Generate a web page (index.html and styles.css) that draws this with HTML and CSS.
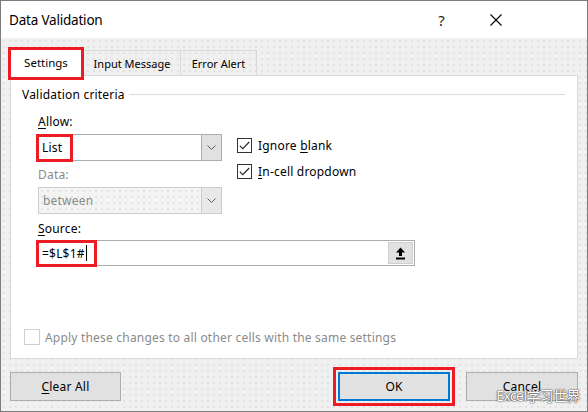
FILE: index.html
```html
<!DOCTYPE html>
<html>
<head>
<meta charset="utf-8">
<link rel="stylesheet" href="styles.css">
</head>
<body>
<div class="window">
  <div class="titlebar">
    <span class="title">Data Validation</span>
    <span class="help">?</span>
    <span class="close"><svg width="12" height="12" viewBox="0 0 12 12"><path d="M0.5 0.5 L11.5 11.5 M11.5 0.5 L0.5 11.5" stroke="#000" stroke-width="1.1" fill="none"/></svg></span>
  </div>
  <div class="body">
    <div class="tabs">
      <div class="tab active">Settings</div>
      <div class="tab">Input Message</div>
      <div class="tab">Error Alert</div>
    </div>
    <div class="panel">
      <div class="group-head"><span>Validation criteria</span><span class="rule"></span></div>
      <div class="criteria">
        <div class="left">
          <div class="lbl"><u>A</u>llow:</div>
          <div class="combo">
            <span class="val"><span class="hl list">List</span></span>
            <span class="drop"><svg width="9" height="5" viewBox="0 0 9 5"><path d="M0.5 0.5 L4.5 4.5 L8.5 0.5" stroke="#5a5a5a" fill="none"/></svg></span>
          </div>
          <div class="lbl disabled gap-data">Data:</div>
          <div class="combo off">
            <span class="val">between</span>
            <span class="drop"><svg width="9" height="5" viewBox="0 0 9 5"><path d="M0.5 0.5 L4.5 4.5 L8.5 0.5" stroke="#5a5a5a" fill="none"/></svg></span>
          </div>
        </div>
        <div class="checks">
          <div class="check"><span class="box"><svg width="11" height="9" viewBox="0 0 11 9"><path d="M0.8 4.6 L3.8 7.6 L10.2 1" stroke="#222" stroke-width="1.1" fill="none"/></svg></span><span>Ignore <u>b</u>lank</span></div>
          <div class="check"><span class="box"><svg width="11" height="9" viewBox="0 0 11 9"><path d="M0.8 4.6 L3.8 7.6 L10.2 1" stroke="#222" stroke-width="1.1" fill="none"/></svg></span><span><u>I</u>n-cell dropdown</span></div>
        </div>
      </div>
      <div class="lbl gap-source"><u>S</u>ource:</div>
      <div class="source">
        <span class="val"><span class="hl formula">=$L$1#<span class="caret"></span></span></span>
        <span class="ref-btn"><svg width="11" height="13" viewBox="0 0 11 13"><path d="M5.5 0.5 L10 5.5 L7 5.5 L7 9 L4 9 L4 5.5 L1 5.5 Z" fill="#000"/><rect x="1" y="10.5" width="9" height="2" fill="#000"/></svg></span>
      </div>
      <div class="apply"><span class="box off"></span><span>Apply these changes to all other cells with the same settings</span></div>
    </div>
    <div class="buttons">
      <div class="btn"><u>C</u>lear All</div>
      <div class="spacer"></div>
      <div class="btn ok">OK</div>
      <div class="btn cancel">Cancel</div>
    </div>
  </div>
  <div class="watermark">Excel学习世界</div>
</div>
</body>
</html>
```

FILE: styles.css
```css
* { box-sizing: border-box; }
html, body { margin: 0; padding: 0; }
body {
  font-family: "Noto Sans", "Noto Sans CJK SC", sans-serif;
  font-size: 12px;
  letter-spacing: 0.2px;
  color: #000;
  background: #fff;
}
u { text-decoration: underline; text-underline-offset: 2px; }
.window {
  position: relative;
  width: 588px;
  height: 412px;
  border: 1px solid #7d7d7d;
  display: flex;
  flex-direction: column;
  background: #fff;
}
.titlebar {
  height: 37px;
  display: flex;
  align-items: center;
  background: #fff;
}
.title {
  font-size: 13.5px;
  margin-left: 8px;
  flex: 1;
  letter-spacing: -0.2px;
}
.help {
  font-size: 15px;
  margin-right: 45px;
  color: #222;
}
.close {
  display: flex;
  margin-right: 85px;
}
.body {
  flex: 1;
  background-color: #f0f0f0;
  background-image: radial-gradient(circle, #dadada 0.6px, transparent 0.9px);
  background-size: 6px 6px;
  padding: 9px 9px 0 7px;
  display: flex;
  flex-direction: column;
}
.tabs {
  display: flex;
  height: 28px;
  align-items: flex-end;
}
.tab {
  height: 25px;
  border: 1px solid #d9d9d9;
  border-bottom: none;
  display: flex;
  align-items: center;
  justify-content: center;
  background: transparent;
  font-size: 11px;
  letter-spacing: 0;
}
.tab + .tab { margin-left: -1px; }
.tab:nth-child(2) { width: 98px; }
.tab:nth-child(3) { width: 77px; }
.tab.active {
  position: relative;
  z-index: 2;
  width: 76px;
  height: 33px;
  margin-bottom: -5px;
  border: 3px solid #ed1c24;
  background: #fff;
  padding-bottom: 3px;
  font-size: 11.5px;
}
.panel {
  margin-left: 2px;
  height: 284px;
  background: #fff;
  border: 1px solid #d9d9d9;
  display: flex;
  flex-direction: column;
  padding-left: 27px;
}
.group-head {
  display: flex;
  align-items: center;
  height: 16px;
  margin-top: 10px;
  margin-left: -16px;
  margin-right: 12px;
}
.rule {
  flex: 1;
  height: 1px;
  background: #dcdcdc;
  margin-left: 4px;
}
.criteria {
  display: flex;
  margin-top: 12px;
}
.left {
  width: 184px;
  display: flex;
  flex-direction: column;
}
.lbl {
  height: 16px;
  line-height: 16px;
}
.disabled { color: #8a8a8a; }
.gap-data { margin-top: 6px; }
.gap-source { margin-top: 7px; }
.combo {
  margin-top: 4px;
  height: 27px;
  width: 184px;
  border: 1px solid #adadad;
  display: flex;
  background: #fff;
}
.combo .val {
  flex: 1;
  display: flex;
  align-items: center;
  padding-left: 0;
}
.combo.off {
  border-color: #cccccc;
  background-color: #f4f4f4;
  background-image: radial-gradient(circle, #dcdcdc 0.6px, transparent 0.9px);
  background-size: 6px 6px;
  color: #8a8a8a;
}
.combo.off .val { padding-left: 4px; }
.drop {
  width: 20px;
  background: #e1e1e1;
  border-left: 1px solid #adadad;
  display: flex;
  align-items: center;
  justify-content: center;
}
.combo.off .drop { border-left-color: #cccccc; background: #e8e8e8; }
.hl {
  display: inline-flex;
  align-items: center;
  border: 3px solid #ed1c24;
  height: 28px;
  margin-left: -3px;
}
.list { width: 37px; padding-left: 3px; }
.formula { width: 61px; padding-left: 3px; height: 27px; }
.caret {
  display: inline-block;
  width: 1px;
  height: 16px;
  background: #000;
  margin-left: 1px;
}
.checks {
  margin-left: 15px;
  margin-top: 24px;
  display: flex;
  flex-direction: column;
  gap: 12px;
}
.check, .apply {
  display: flex;
  align-items: center;
  height: 14px;
}
.box {
  width: 15px;
  height: 15px;
  border: 1px solid #333;
  background: #fff;
  display: flex;
  align-items: center;
  justify-content: center;
  margin-right: 6px;
}
.box.off { border-color: #cfcfcf; }
.source {
  margin-top: 3px;
  width: 377px;
  height: 26px;
  border: 1px solid #adadad;
  display: flex;
  background: #fff;
}
.source .val { flex: 1; display: flex; align-items: center; }
.ref-btn {
  width: 25px;
  margin: 1px;
  background: #e1e1e1;
  border: 1px solid #cfcfcf;
  display: flex;
  align-items: center;
  justify-content: center;
}
.apply {
  margin-top: 64px;
  margin-left: -14px;
  color: #8a8a8a;
}
.apply .box { width: 16px; height: 16px; margin-right: 5px; }
.buttons {
  display: flex;
  margin-top: 13px;
  margin-left: 2px;
  height: 29px;
}
.spacer { flex: 1; }
.btn {
  width: 111px;
  height: 29px;
  background: #e1e1e1;
  border: 1px solid #adadad;
  display: flex;
  align-items: center;
  justify-content: center;
}
.btn.ok {
  width: 112px;
  border: 2px solid #0078d7;
  outline: 3px solid #ed1c24;
  outline-offset: 2px;
  margin-right: 16px;
}
.btn.cancel { width: 112px; }
.watermark {
  position: absolute;
  right: 7px;
  bottom: 6px;
  font-size: 14px;
  color: #fff;
  letter-spacing: -0.6px;
  text-shadow: 0 0 1px #444, 0 0 1px #444, 0 0 2px #666;
}
```
